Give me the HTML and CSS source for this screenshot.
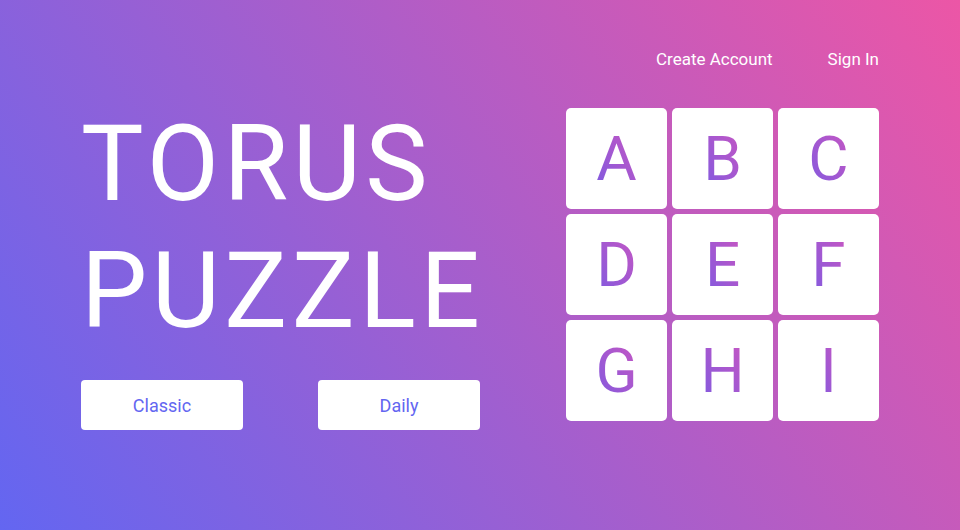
FILE: index.html
```html
<!DOCTYPE html>
<html lang="en">
<head>
<meta charset="utf-8">
<title>Torus Puzzle</title>
<link rel="stylesheet" href="styles.css">
</head>
<body>
<div class="page">
  <nav class="nav">
    <a class="nav-link" href="#">Create Account</a>
    <a class="nav-link" href="#">Sign In</a>
  </nav>
  <main class="main">
    <section class="intro">
      <h1 class="title">TORUS<br>PUZZLE</h1>
      <div class="modes">
        <button class="mode-btn">Classic</button>
        <button class="mode-btn">Daily</button>
      </div>
    </section>
    <section class="board">
      <div class="tile"><span class="glyph">A</span></div>
      <div class="tile"><span class="glyph">B</span></div>
      <div class="tile"><span class="glyph">C</span></div>
      <div class="tile"><span class="glyph">D</span></div>
      <div class="tile"><span class="glyph">E</span></div>
      <div class="tile"><span class="glyph">F</span></div>
      <div class="tile"><span class="glyph">G</span></div>
      <div class="tile"><span class="glyph">H</span></div>
      <div class="tile"><span class="glyph">I</span></div>
    </section>
  </main>
</div>
</body>
</html>
```
FILE: styles.css
```css
html, body {
  margin: 0;
  padding: 0;
}
body {
  font-family: Roboto, "Liberation Sans", sans-serif;
  color: #fff;
}
.page {
  box-sizing: border-box;
  width: 960px;
  height: 530px;
  padding: 47px 81px 0 81px;
  background: linear-gradient(55deg, #6366f1 0%, #ec56a6 100%);
  display: flex;
  flex-direction: column;
}
.nav {
  display: flex;
  justify-content: flex-end;
  gap: 55px;
  height: 24px;
}
.nav-link {
  color: #fff;
  text-decoration: none;
  font-size: 17px;
  line-height: 24px;
  font-weight: 400;
}
.main {
  margin-top: 28px;
  display: flex;
  justify-content: space-between;
  align-items: center;
}
.intro {
  width: 399px;
  display: flex;
  flex-direction: column;
}
.title {
  margin: 0;
  font-size: 105px;
  line-height: 127px;
  font-weight: 400;
  letter-spacing: 4.5px;
  color: #fff;
  padding-top: 2px;
}
.modes {
  margin-top: 25px;
  display: flex;
  justify-content: space-between;
}
.mode-btn {
  width: 162px;
  height: 50px;
  border: none;
  border-radius: 4px;
  background: #fff;
  color: #6366f1;
  font-family: Roboto, "Liberation Sans", sans-serif;
  font-size: 18px;
  cursor: pointer;
}
.board {
  display: grid;
  grid-template-columns: repeat(3, 101px);
  grid-template-rows: repeat(3, 101px);
  gap: 5px;
}
.tile {
  background: #fff;
  border-radius: 5px;
  display: flex;
  align-items: center;
  justify-content: center;
}
.glyph {
  font-size: 62px;
  line-height: 1;
  background: linear-gradient(to top right, #7f5ae0, #c856c2);
  -webkit-background-clip: text;
  background-clip: text;
  color: transparent;
}
```
